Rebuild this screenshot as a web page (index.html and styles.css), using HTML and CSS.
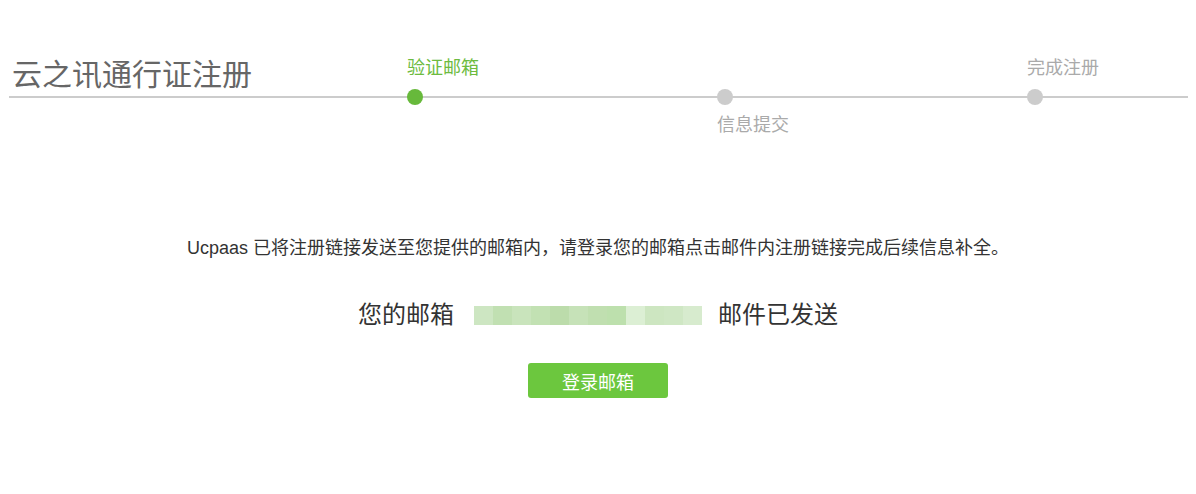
FILE: index.html
```html
<!DOCTYPE html>
<html lang="zh-CN">
<head>
    <meta charset="UTF-8">
    <meta name="viewport" content="width=device-width, initial-scale=1.0">
    <title>云之讯通行证注册</title>
    <link rel="stylesheet" href="styles.css">
</head>
<body>
    <div class="progress">
        <h1 class="title">云之讯通行证注册</h1>
        <div class="track"></div>
        <div class="step step-1 active">
            <span class="label top">验证邮箱</span>
            <span class="dot"></span>
        </div>
        <div class="step step-2">
            <span class="dot"></span>
            <span class="label bottom">信息提交</span>
        </div>
        <div class="step step-3">
            <span class="label top">完成注册</span>
            <span class="dot"></span>
        </div>
    </div>

    <div class="content">
        <p class="message">Ucpaas 已将注册链接发送至您提供的邮箱内，请登录您的邮箱点击邮件内注册链接完成后续信息补全。</p>
        <div class="mail-line">
            <span>您的邮箱</span>
            <span class="mail-blur">
                <i style="background:#cde6c2"></i>
                <i style="background:#c1e0b2"></i>
                <i style="background:#c9e4bc"></i>
                <i style="background:#c2e1b3"></i>
                <i style="background:#bcdcab"></i>
                <i style="background:#c6e2b8"></i>
                <i style="background:#c0dfb0"></i>
                <i style="background:#bde0ad"></i>
                <i style="background:#dcefd4"></i>
                <i style="background:#cde6c1"></i>
                <i style="background:#cfe7c4"></i>
                <i style="background:#d7ebce"></i>
            </span>
            <span>邮件已发送</span>
        </div>
        <button class="login-btn">登录邮箱</button>
    </div>
</body>
</html>
```

FILE: styles.css
```css
body {
    margin: 0;
    background: #fff;
    font-family: "Liberation Sans", Arial, "Noto Sans CJK SC", sans-serif;
    color: #333;
}
.progress {
    display: grid;
    grid-template-columns: 398px 310px 310px 1fr;
    grid-template-rows: 33px 16px 30px;
    margin: 56px 8px 0 9px;
}
.title {
    grid-column: 1;
    grid-row: 1 / span 2;
    margin: 0;
    padding: 4px 0 0 3px;
    font-size: 30px;
    line-height: 30px;
    font-weight: normal;
    color: #666;
    position: relative;
    z-index: 1;
}
.track {
    grid-column: 1 / -1;
    grid-row: 2;
    background: linear-gradient(#ccc, #ccc) center / 100% 2px no-repeat;
}
.step {
    grid-row: 1 / span 3;
    display: grid;
    grid-template-rows: 33px 16px 30px;
}
.step-1 { grid-column: 2; }
.step-2 { grid-column: 3; }
.step-3 { grid-column: 4; }
.dot {
    grid-row: 2;
    width: 16px;
    height: 16px;
    border-radius: 50%;
    background: #ccc;
}
.label {
    font-size: 18px;
    line-height: 18px;
    color: #aaa;
    white-space: nowrap;
}
.label.top {
    grid-row: 1;
    margin-top: 3px;
}
.label.bottom {
    grid-row: 3;
    margin-top: 11px;
}
.active .dot {
    background: #67b93b;
}
.active .label {
    color: #6dbb40;
}
.content {
    display: flex;
    flex-direction: column;
    align-items: center;
    margin-top: 104px;
}
.message {
    margin: 0;
    font-size: 18px;
    line-height: 18px;
    color: #333;
}
.mail-line {
    display: flex;
    align-items: center;
    margin-top: 46px;
    font-size: 24px;
    line-height: 24px;
    color: #333;
}
.mail-blur {
    display: flex;
    margin: 1px 16px 0 20px;
}
.mail-blur i {
    width: 19px;
    height: 19px;
}
.login-btn {
    margin-top: 36px;
    width: 140px;
    height: 35px;
    border: none;
    border-radius: 3px;
    background: #6cc73e;
    color: #fff;
    font-family: "Liberation Sans", "Noto Sans CJK SC", sans-serif;
    font-size: 18px;
    cursor: pointer;
}
```
